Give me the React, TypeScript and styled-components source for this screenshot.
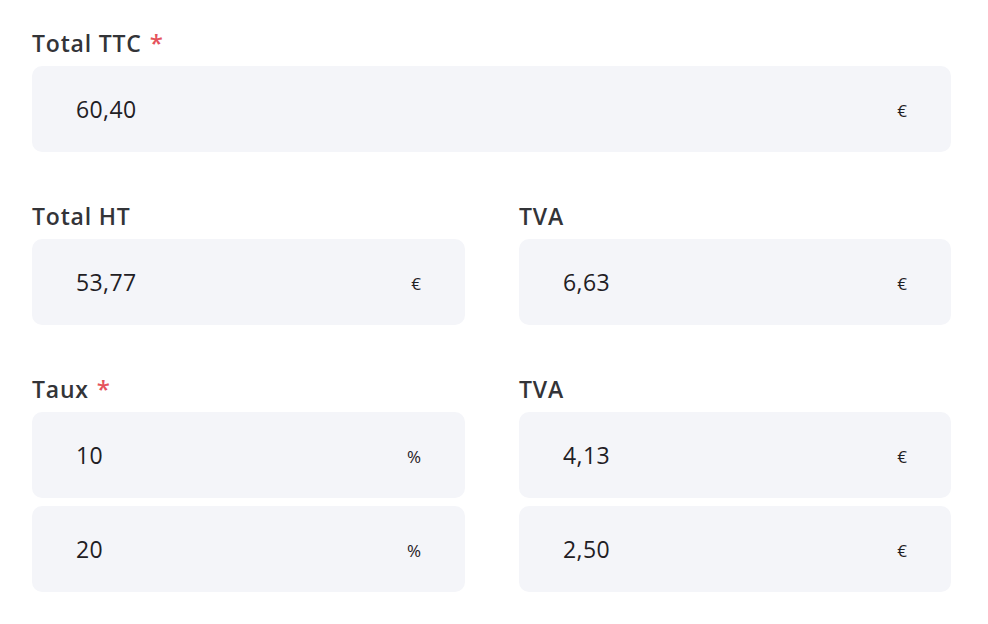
import styled, { createGlobalStyle } from 'styled-components';

const GlobalStyle = createGlobalStyle`
	body {
		margin: 0;
		background: #ffffff;
		font-family: 'Open Sans', 'Noto Sans', sans-serif;
	}
`;

type Field = { value: string; unit: string };

const Form = styled.div`
	display: flex;
	flex-direction: column;
	gap: 50px;
	width: 919px;
	padding: 29px 0 0 32px;
`;

const Row = styled.div`
	display: grid;
	grid-template-columns: 433px 432px;
	column-gap: 54px;
`;

const Group = styled.div`
	display: flex;
	flex-direction: column;
	gap: 8px;
`;

const Label = styled.div`
	font-size: 23px;
	line-height: 28px;
	font-weight: 600;
	letter-spacing: 0.8px;
	color: #333438;
	margin-bottom: 1px;

	& span {
		color: #e5535c;
		margin-left: 8px;
		font-size: 24px;
	}
`;

const Input = styled.div`
	display: flex;
	align-items: center;
	justify-content: space-between;
	height: 86px;
	padding: 0 44px;
	box-sizing: border-box;
	background: #f4f5f9;
	border-radius: 10px;
`;

const Value = styled.div`
	font-size: 23px;
	letter-spacing: 0.4px;
	color: #1f2024;
`;

const Unit = styled.div`
	font-size: 17px;
	color: #1f2024;
	margin-top: 2px;
`;

const FieldGroup = ({ label, required, fields }: { label: string; required?: boolean; fields: Field[] }) => (
	<Group>
		<Label>
			{label}
			{required && <span>*</span>}
		</Label>
		{fields.map((f, i) => (
			<Input key={i}>
				<Value>{f.value}</Value>
				<Unit>{f.unit}</Unit>
			</Input>
		))}
	</Group>
);

export default function App() {
	return (
		<>
			<GlobalStyle />
			<Form>
				<FieldGroup label="Total TTC" required fields={[{ value: '60,40', unit: '€' }]} />
				<Row>
					<FieldGroup label="Total HT" fields={[{ value: '53,77', unit: '€' }]} />
					<FieldGroup label="TVA" fields={[{ value: '6,63', unit: '€' }]} />
				</Row>
				<Row>
					<FieldGroup
						label="Taux"
						required
						fields={[
							{ value: '10', unit: '%' },
							{ value: '20', unit: '%' },
						]}
					/>
					<FieldGroup
						label="TVA"
						fields={[
							{ value: '4,13', unit: '€' },
							{ value: '2,50', unit: '€' },
						]}
					/>
				</Row>
			</Form>
		</>
	);
}
